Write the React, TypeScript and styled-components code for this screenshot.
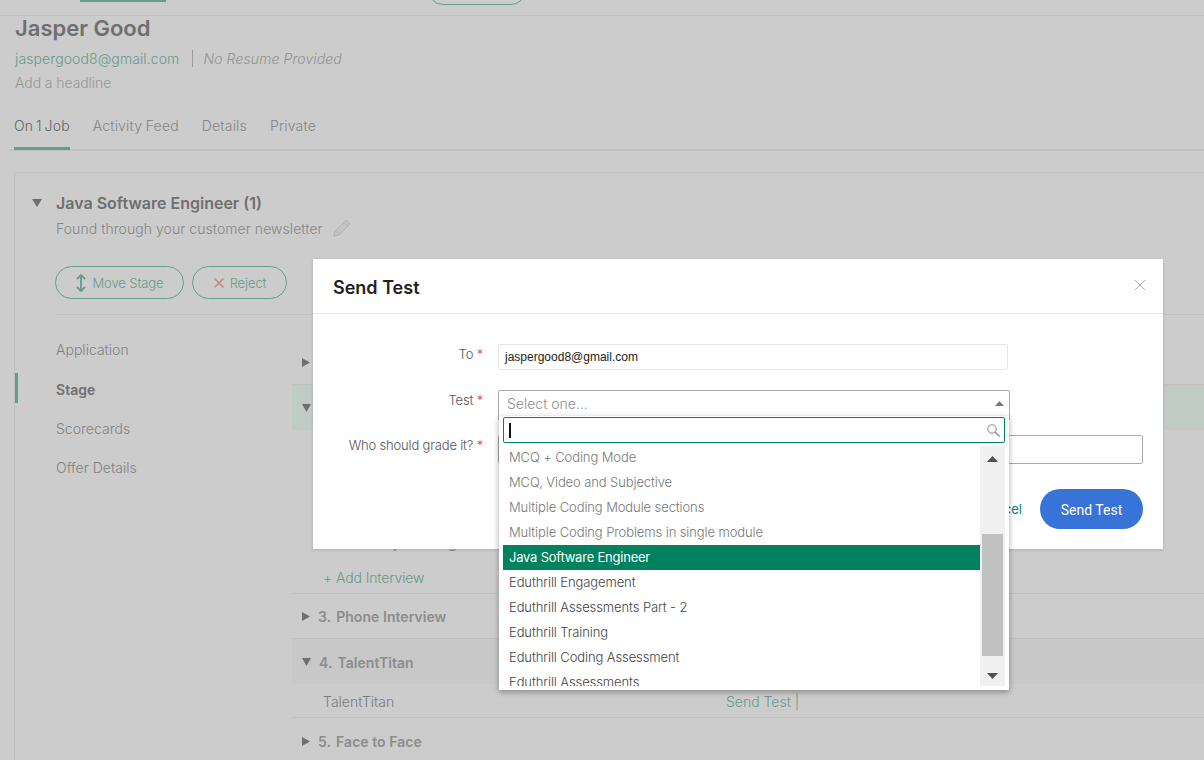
import React from "react";
import styled, { createGlobalStyle } from "styled-components";

const Global = createGlobalStyle`
  html, body { margin: 0; padding: 0; background: #fff; }
  body { font-family: Inter, "Liberation Sans", sans-serif; width: 1204px; height: 760px; overflow: hidden; }
  * { box-sizing: border-box; }
`;

const Page = styled.div`
  position: relative;
  width: 1204px;
  height: 760px;
  overflow: hidden;
  background: #fff;
`;

const TopBar = styled.header`
  height: 16px;
  display: flex;
  overflow: hidden;
  border-bottom: 1px solid #f0f0f0;
`;
const TopTabLine = styled.div`
  width: 86px;
  height: 2px;
  margin-left: 80px;
  background: #7cc6b0;
`;
const TopPill = styled.div`
  width: 98px;
  height: 30px;
  margin: -25px 0 0 262px;
  border: 1px solid #7cc6b0;
  border-radius: 15px;
`;

const Candidate = styled.section`
  padding: 0 15px;
`;
const Name = styled.h1`
  margin: 0;
  height: 26px;
  font-size: 22px;
  line-height: 25px;
  font-weight: 600;
  color: #8b8b8b;
`;
const MetaRow = styled.div`
  margin-top: 8px;
  display: flex;
  align-items: center;
  height: 17px;
  font-size: 14px;
  font-weight: 300;
`;
const Email = styled.span`
  color: #7fc2ae;
  letter-spacing: 0.1px;
`;
const Separator = styled.span`
  width: 1px;
  height: 17px;
  margin: 0 10px 0 13px;
  background: #c4c4c4;
`;
const NoResume = styled.span`
  color: #b8b8b8;
  font-style: italic;
  letter-spacing: 0.1px;
`;
const Headline = styled.div`
  margin-top: 7px;
  height: 17px;
  line-height: 17px;
  font-size: 14px;
  font-weight: 300;
  letter-spacing: -0.08px;
  color: #bdbdbd;
`;

const Tabs = styled.nav`
  margin: 15px 0 0 9px;
  height: 45px;
  padding-left: 5px;
  display: flex;
  gap: 23px;
  border-bottom: 2px solid #f0f0f0;
`;
const Tab = styled.div<{ $active?: boolean }>`
  height: 44px;
  padding-top: 11px;
  font-size: 14px;
  font-weight: 300;
  letter-spacing: 0.18px;
  word-spacing: ${(p) => (p.$active ? "-1.3px" : "-0.5px")};
  line-height: 17px;
  color: ${(p) => (p.$active ? "#7f7f7f" : "#a8a8a8")};
  border-bottom: ${(p) => (p.$active ? "3px solid #7cc6b0" : "none")};
`;

const Card = styled.section`
  margin: 21px 0 0 14px;
  width: 1300px;
  border: 1px solid #f0f0f0;
  padding: 18px 0 0 0;
`;
const CardHead = styled.div`
  display: grid;
  grid-template-columns: 41px auto;
  height: 24px;
  align-items: center;
`;
const CaretCell = styled.span`
  padding-left: 17px;
  display: flex;
`;
const JobTitle = styled.h2`
  margin: -1px 0 0;
  font-size: 16px;
  line-height: 20px;
  font-weight: 600;
  color: #8b8b8b;
`;
const SourceRow = styled.div`
  margin: 1px 0 0 41px;
  height: 24px;
  display: flex;
  align-items: center;
  gap: 10px;
  font-size: 14px;
  font-weight: 300;
  letter-spacing: 0.06px;
  color: #a8a8a8;
`;
const ActionRow = styled.div`
  margin: 26px 0 0 40px;
  display: flex;
  gap: 8px;
  padding-bottom: 15px;
  border-bottom: 1px solid #f0f0f0;
`;
const OutlineButton = styled.button<{ $w: number }>`
  width: ${(p) => p.$w}px;
  height: 33px;
  display: flex;
  align-items: center;
  justify-content: center;
  gap: 5px;
  background: transparent;
  border: 1px solid #7cc6b0;
  border-radius: 17px;
  font: inherit;
  font-size: 13px;
  font-weight: 300;
  letter-spacing: -0.1px;
  color: #7fc2ae;
  padding: 0;
`;

const Columns = styled.div`
  display: grid;
  grid-template-columns: 277px 1fr;
`;
const SideNav = styled.nav`
  padding-top: 15px;
  display: flex;
  flex-direction: column;
`;
const SideItem = styled.div<{ $active?: boolean }>`
  height: 39.4px;
  display: flex;
  align-items: center;
  padding-left: 41px;
  font-size: 14px;
  letter-spacing: 0.02px;
  color: ${(p) => (p.$active ? "#8b8b8b" : "#a3a3a3")};
  font-weight: ${(p) => (p.$active ? 600 : 300)};
  position: relative;
  &::before {
    content: "";
    display: ${(p) => (p.$active ? "block" : "none")};
    position: absolute;
    left: 0;
    top: 4px;
    width: 3px;
    height: 30px;
    background: #7cc6b0;
  }
`;

const Stages = styled.div`
  padding-top: 24px;
`;
const StageHead = styled.div<{ $bg?: string; $h: number }>`
  height: ${(p) => p.$h}px;
  display: flex;
  align-items: center;
  padding: 1px 0 0 10px;
  gap: 8px;
  background: ${(p) => p.$bg || "transparent"};
  font-size: 14px;
  font-weight: 600;
  letter-spacing: 0.05px;
  color: #b0b0b0;
`;
const StageNum = styled.span`
  margin-right: 5px;
`;
const StageBlock = styled.div`
  border-bottom: 1px solid #f0f0f0;
`;
const InterviewRow = styled.div<{ $h: number }>`
  height: ${(p) => p.$h}px;
  padding-left: 31px;
  display: grid;
  grid-template-columns: 403px 1fr;
  align-items: center;
  font-size: 14px;
  font-weight: 300;
  color: #9c9c9c;
`;
const SendLink = styled.span`
  color: #7fc2ae;
`;
const AddInterview = styled.div`
  height: 38px;
  padding: 7px 0 0 31px;
  display: flex;
  align-items: center;
  font-size: 14px;
  font-weight: 300;
  letter-spacing: -0.1px;
  color: #7fc2ae;
`;
const HiddenBlock = styled.div`
  height: 100px;
`;
const TalentRow = styled(InterviewRow)`
  padding-top: 2px;
`;

const Overlay = styled.div`
  position: absolute;
  inset: 0;
  background: rgba(0, 0, 0, 0.2);
`;

const Modal = styled.div`
  position: absolute;
  left: 313px;
  top: 259px;
  width: 850px;
  height: 290px;
  background: #fff;
  box-shadow: 0 1px 3px rgba(0, 0, 0, 0.15);
`;
const ModalHead = styled.div`
  height: 55px;
  display: flex;
  align-items: center;
  justify-content: space-between;
  padding: 0 17px 0 20px;
  border-bottom: 1px solid #e6e6e6;
`;
const ModalTitle = styled.h3`
  margin: 3px 0 0;
  font-size: 18px;
  font-weight: 600;
  color: #222;
`;
const Form = styled.div`
  padding: 30px 20px 0 0;
  display: flex;
  flex-direction: column;
`;
const FieldRow = styled.div<{ $mt?: number }>`
  display: grid;
  grid-template-columns: 170px 1fr;
  column-gap: 15px;
  margin-top: ${(p) => p.$mt || 0}px;
  position: relative;
`;
const Label = styled.label`
  text-align: right;
  font-size: 13px;
  font-weight: 300;
  letter-spacing: -0.17px;
  line-height: 20px;
  color: #555;
`;
const Star = styled.span`
  color: #e0354b;
`;
const EmailInput = styled.div`
  width: 510px;
  height: 26px;
  border: 1px solid #e5e5e5;
  border-radius: 2px;
  padding-left: 6px;
  display: flex;
  align-items: center;
  font-family: "Liberation Sans", Arial, sans-serif;
  font-size: 12px;
  color: #222;
`;
const SelectBox = styled.div`
  width: 512px;
  height: 30px;
  border: 1px solid #aaa;
  border-bottom: none;
  border-radius: 2px 2px 0 0;
  padding: 0 5px 4px 8px;
  display: flex;
  align-items: center;
  justify-content: space-between;
  font-size: 14px;
  font-weight: 300;
  color: #8e8e8e;
`;
const GradeInput = styled.div`
  height: 29px;
  border: 1px solid #aaa;
  border-radius: 2px;
`;
const Dropdown = styled.div`
  position: absolute;
  left: 186px;
  top: 26px;
  width: 510px;
  height: 274px;
  background: #fff;
  box-shadow: 0 2px 6px rgba(0, 0, 0, 0.35);
  padding: 1px 4px 4px;
  z-index: 2;
`;
const SearchBox = styled.div`
  height: 26px;
  border: 1px solid #00825f;
  border-radius: 2px;
  padding: 0 4px 0 5px;
  display: flex;
  align-items: center;
  justify-content: space-between;
`;
const Cursor = styled.span`
  width: 2px;
  height: 15px;
  background: #111;
`;
const ListArea = styled.div`
  margin-top: 2px;
  height: 241px;
  display: grid;
  grid-template-columns: 477px 25px;
  overflow: hidden;
`;
const OptionList = styled.div`
  overflow: hidden;
`;
const Option = styled.div<{ $tone: "light" | "dark" | "active" }>`
  height: 25px;
  line-height: 25px;
  padding-left: 6px;
  font-size: 13px;
  font-weight: ${(p) => (p.$tone === "active" ? 400 : 300)};
  letter-spacing: ${(p) => (p.$tone === "active" ? "-0.22px" : "-0.1px")};
  white-space: nowrap;
  background: ${(p) => (p.$tone === "active" ? "#00825f" : "transparent")};
  color: ${(p) => (p.$tone === "active" ? "#fff" : p.$tone === "light" ? "#777" : "#444")};
`;
const Scrollbar = styled.div`
  background: #f0f0f0;
  margin-top: 1px;
  display: flex;
  flex-direction: column;
  align-items: center;
  padding-top: 10px;
`;
const Thumb = styled.div`
  width: 21px;
  height: 122px;
  margin: 72px 0 17px;
  background: #c1c1c1;
`;
const Actions = styled.div`
  position: absolute;
  left: 0;
  right: 20px;
  bottom: 20px;
  display: flex;
  justify-content: flex-end;
  align-items: center;
  gap: 18px;
`;
const CancelLink = styled.span`
  font-size: 13px;
  color: #00857a;
`;
const SendButton = styled.button`
  width: 103px;
  height: 40px;
  border: none;
  border-radius: 20px;
  background: #3873d8;
  color: #fff;
  font-family: Roboto, "Liberation Sans", sans-serif;
  font-size: 14px;
  padding: 1px 0 0;
`;
const IconButton = styled.button`
  border: none;
  background: none;
  padding: 0;
  margin-bottom: 3px;
  display: flex;
`;

const Tri = ({ dir, color = "#8b8b8b", w = 9, h = 8 }: { dir: "down" | "right" | "up"; color?: string; w?: number; h?: number }) => {
  const pts =
    dir === "down"
      ? `0,0 ${w},0 ${w / 2},${h}`
      : dir === "up"
        ? `0,${h} ${w},${h} ${w / 2},0`
        : `0,0 ${w},${h / 2} 0,${h}`;
  return (
    <svg width={w} height={h} viewBox={`0 0 ${w} ${h}`} style={{ flex: "none" }}>
      <polygon points={pts} fill={color} />
    </svg>
  );
};

const options: [string, "light" | "dark" | "active"][] = [
  ["MCQ + Coding Mode", "light"],
  ["MCQ, Video and Subjective", "light"],
  ["Multiple Coding Module sections", "light"],
  ["Multiple Coding Problems in single module", "light"],
  ["Java Software Engineer", "active"],
  ["Eduthrill Engagement", "dark"],
  ["Eduthrill Assessments Part - 2", "dark"],
  ["Eduthrill Training", "dark"],
  ["Eduthrill Coding Assessment", "dark"],
  ["Eduthrill Assessments", "dark"],
];

export default function App() {
  return (
    <Page>
      <Global />
      <TopBar>
        <TopTabLine />
        <TopPill />
      </TopBar>
      <Candidate>
        <Name>Jasper Good</Name>
        <MetaRow>
          <Email>jaspergood8@gmail.com</Email>
          <Separator />
          <NoResume>No Resume Provided</NoResume>
        </MetaRow>
        <Headline>Add a headline</Headline>
      </Candidate>
      <Tabs>
        <Tab $active>On 1 Job</Tab>
        <Tab>Activity Feed</Tab>
        <Tab>Details</Tab>
        <Tab>Private</Tab>
      </Tabs>
      <Card>
        <CardHead>
          <CaretCell>
            <Tri dir="down" w={10} h={8} />
          </CaretCell>
          <JobTitle>Java Software Engineer (1)</JobTitle>
        </CardHead>
        <SourceRow>
          Found through your customer newsletter
          <svg width="18" height="18" viewBox="0 0 18 18">
            <path d="M13 1 17 5 6 16 1 17 2 12Z" fill="#f5f5f5" stroke="#e0e0e0" strokeWidth="1" />
            <path d="M11 3.5 14.5 7M3 12 6 15" stroke="#e0e0e0" strokeWidth="1" />
          </svg>
        </SourceRow>
        <ActionRow>
          <OutlineButton $w={129}>
            <svg width="12" height="18" viewBox="0 0 12 18">
              <path d="M6 1V17M2 5 6 1 10 5M2 13 6 17 10 13" fill="none" stroke="#7cc6b0" strokeWidth="1.8" />
            </svg>
            Move Stage
          </OutlineButton>
          <OutlineButton $w={95}>
            <svg width="12" height="12" viewBox="0 0 12 12">
              <path d="M1.5 1.5 10.5 10.5M10.5 1.5 1.5 10.5" fill="none" stroke="#f0a9b5" strokeWidth="1.5" />
            </svg>
            Reject
          </OutlineButton>
        </ActionRow>
        <Columns>
          <SideNav>
            <SideItem>Application</SideItem>
            <SideItem $active>Stage</SideItem>
            <SideItem>Scorecards</SideItem>
            <SideItem>Offer Details</SideItem>
          </SideNav>
          <Stages>
            <StageBlock>
              <StageHead $h={45}>
                <Tri dir="right" w={8} h={9} />
                <span>1. Applied</span>
              </StageHead>
            </StageBlock>
            <StageBlock>
              <StageHead $h={45} $bg="#f2fef8">
                <Tri dir="down" />
                <span>2. Screening</span>
              </StageHead>
              <HiddenBlock />
              <InterviewRow $h={25}>
                <span>On-site Day Meeting</span>
              </InterviewRow>
              <AddInterview>+ Add Interview</AddInterview>
            </StageBlock>
            <StageBlock>
              <StageHead $h={44}>
                <Tri dir="right" w={8} h={9} />
                <span>
                  <StageNum>3.</StageNum>Phone Interview
                </span>
              </StageHead>
            </StageBlock>
            <StageBlock>
              <StageHead $h={45} $bg="#fbfbfb">
                <Tri dir="down" />
                <span>
                  <StageNum>4.</StageNum>TalentTitan
                </span>
              </StageHead>
              <TalentRow $h={33}>
                <span>TalentTitan</span>
                <SendLink>Send Test |</SendLink>
              </TalentRow>
            </StageBlock>
            <StageHead $h={46}>
              <Tri dir="right" w={8} h={9} />
              <span>
                <StageNum>5.</StageNum>Face to Face
              </span>
            </StageHead>
          </Stages>
        </Columns>
      </Card>
      <Overlay />
      <Modal>
        <ModalHead>
          <ModalTitle>Send Test</ModalTitle>
          <IconButton aria-label="Close">
            <svg width="12" height="12" viewBox="0 0 12 12">
              <path d="M1 1 11 11M11 1 1 11" stroke="#aaa" strokeWidth="1" />
            </svg>
          </IconButton>
        </ModalHead>
        <Form>
          <FieldRow>
            <Label>
              To <Star>*</Star>
            </Label>
            <EmailInput>jaspergood8@gmail.com</EmailInput>
          </FieldRow>
          <FieldRow $mt={20}>
            <Label>
              Test <Star>*</Star>
            </Label>
            <SelectBox>
              Select one...
              <Tri dir="up" color="#777" w={9} h={5} />
            </SelectBox>
            <Dropdown>
              <SearchBox>
                <Cursor />
                <svg width="13" height="13" viewBox="0 0 13 13">
                  <circle cx="5" cy="5" r="4.2" fill="none" stroke="#888" strokeWidth="1" />
                  <path d="M8 8 12.5 12.5" stroke="#888" strokeWidth="1.2" />
                </svg>
              </SearchBox>
              <ListArea>
                <OptionList>
                  {options.map(([t, tone]) => (
                    <Option key={t} $tone={tone}>
                      {t}
                    </Option>
                  ))}
                </OptionList>
                <Scrollbar>
                  <Tri dir="up" color="#505050" w={11} h={6} />
                  <Thumb />
                  <Tri dir="down" color="#505050" w={11} h={6} />
                </Scrollbar>
              </ListArea>
            </Dropdown>
          </FieldRow>
          <FieldRow $mt={15}>
            <Label>
              Who should grade it? <Star>*</Star>
            </Label>
            <GradeInput />
          </FieldRow>
        </Form>
        <Actions>
          <CancelLink>Cancel</CancelLink>
          <SendButton>Send Test</SendButton>
        </Actions>
      </Modal>
    </Page>
  );
}
